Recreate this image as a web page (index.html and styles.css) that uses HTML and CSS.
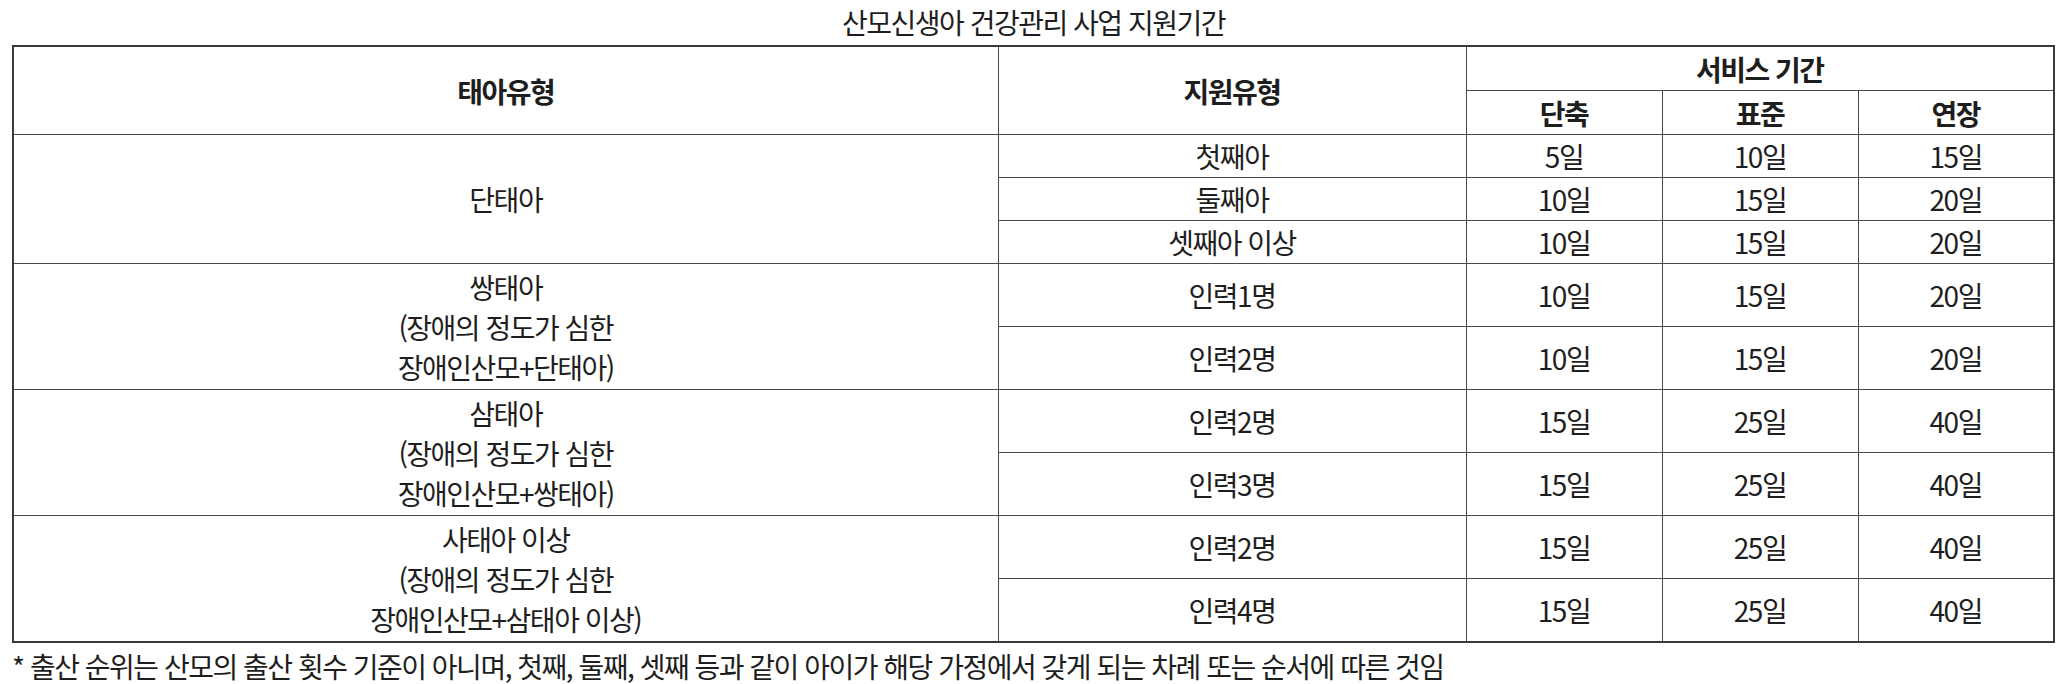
FILE: index.html
```html
<!DOCTYPE html>
<html lang="ko">
<head>
<meta charset="utf-8">
<title>산모신생아 건강관리 사업 지원기간</title>
<link rel="stylesheet" href="styles.css">
</head>
<body>
<div class="wrap">
  <div class="caption">산모신생아 건강관리 사업 지원기간</div>
  <table class="tbl">
    <colgroup>
      <col class="c1"><col class="c2"><col class="c3"><col class="c3"><col class="c3">
    </colgroup>
    <thead>
      <tr class="h1">
        <th rowspan="2">태아유형</th>
        <th rowspan="2">지원유형</th>
        <th colspan="3">서비스 기간</th>
      </tr>
      <tr class="h2">
        <th>단축</th><th>표준</th><th>연장</th>
      </tr>
    </thead>
    <tbody>
      <tr class="r1"><td rowspan="3">단태아</td><td>첫째아</td><td>5일</td><td>10일</td><td>15일</td></tr>
      <tr class="r1"><td>둘째아</td><td>10일</td><td>15일</td><td>20일</td></tr>
      <tr class="r1"><td>셋째아 이상</td><td>10일</td><td>15일</td><td>20일</td></tr>
      <tr class="r2"><td rowspan="2" class="multi">쌍태아<br>(장애의 정도가 심한<br>장애인산모+단태아)</td><td>인력1명</td><td>10일</td><td>15일</td><td>20일</td></tr>
      <tr class="r2"><td>인력2명</td><td>10일</td><td>15일</td><td>20일</td></tr>
      <tr class="r2"><td rowspan="2" class="multi">삼태아<br>(장애의 정도가 심한<br>장애인산모+쌍태아)</td><td>인력2명</td><td>15일</td><td>25일</td><td>40일</td></tr>
      <tr class="r2"><td>인력3명</td><td>15일</td><td>25일</td><td>40일</td></tr>
      <tr class="r2"><td rowspan="2" class="multi">사태아 이상<br>(장애의 정도가 심한<br>장애인산모+삼태아 이상)</td><td>인력2명</td><td>15일</td><td>25일</td><td>40일</td></tr>
      <tr class="r2"><td>인력4명</td><td>15일</td><td>25일</td><td>40일</td></tr>
    </tbody>
  </table>
  <p class="note">* 출산 순위는 산모의 출산 횟수 기준이 아니며, 첫째, 둘째, 셋째 등과 같이 아이가 해당 가정에서 갖게 되는 차례 또는 순서에 따른 것임</p>
</div>
</body>
</html>
```

FILE: styles.css
```css
html, body {
  margin: 0;
  padding: 0;
  background: #ffffff;
}
body {
  font-family: "Noto Sans CJK KR", "Noto Sans", sans-serif;
  color: #1e1e1e;
  font-size: 28px;
  letter-spacing: -1.5px;
}
.wrap {
  padding: 0 15px 0 12px;
}
.caption {
  height: 45px;
  line-height: 45px;
  text-align: center;
  padding-left: 2px;
}
.tbl {
  width: 2041px;
  border-collapse: collapse;
  table-layout: fixed;
  border: 2px solid #3a3a3a;
}
.c1 { width: 985px; }
.c2 { width: 468px; }
.c3 { width: 196px; }
.tbl th, .tbl td {
  border: 1px solid #4a4a4a;
  text-align: center;
  vertical-align: middle;
  padding: 0;
  line-height: 40px;
}
.tbl th {
  font-weight: 700;
}
.h1 th, .h2 th { height: 43px; }
.r1 td { height: 42px; }
.r2 td { height: 62px; }
.note {
  margin: 0;
  padding-top: 4px;
  line-height: 38px;
  letter-spacing: -1.5px;
}
```
